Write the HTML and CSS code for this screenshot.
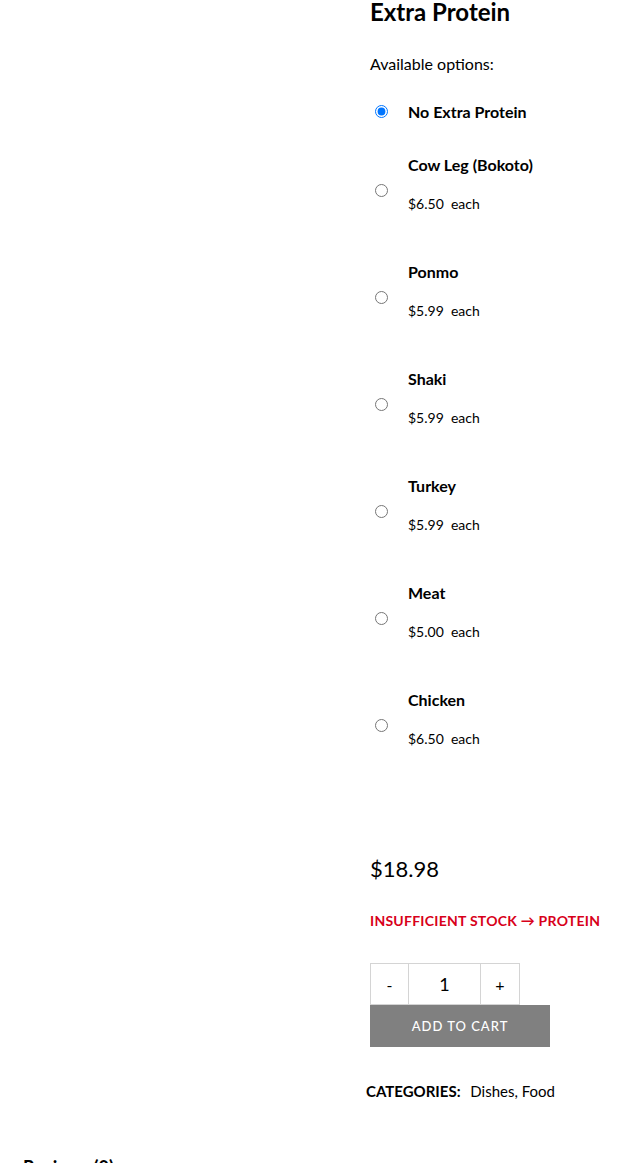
FILE: index.html
```html
<!DOCTYPE html>
<html>
<head>
<meta charset="utf-8">
<link rel="stylesheet" href="styles.css">
</head>
<body>
<div class="product">
  <div class="gallery"></div>
  <div class="summary">
    <h3 class="addon-title">Extra Protein</h3>
    <p class="avail">Available options:</p>
    <div class="opt opt-first">
      <input type="radio" name="p" checked>
      <div class="info"><div class="name">No Extra Protein</div></div>
    </div>
    <div class="opt">
      <input type="radio" name="p">
      <div class="info"><div class="name">Cow Leg (Bokoto)</div><div class="price">$6.50&nbsp; each</div></div>
    </div>
    <div class="opt">
      <input type="radio" name="p">
      <div class="info"><div class="name">Ponmo</div><div class="price">$5.99&nbsp; each</div></div>
    </div>
    <div class="opt">
      <input type="radio" name="p">
      <div class="info"><div class="name">Shaki</div><div class="price">$5.99&nbsp; each</div></div>
    </div>
    <div class="opt">
      <input type="radio" name="p">
      <div class="info"><div class="name">Turkey</div><div class="price">$5.99&nbsp; each</div></div>
    </div>
    <div class="opt">
      <input type="radio" name="p">
      <div class="info"><div class="name">Meat</div><div class="price">$5.00&nbsp; each</div></div>
    </div>
    <div class="opt">
      <input type="radio" name="p">
      <div class="info"><div class="name">Chicken</div><div class="price">$6.50&nbsp; each</div></div>
    </div>
    <div class="total">$18.98</div>
    <div class="stock">Insufficient stock → Protein</div>
    <div class="qty">
      <span class="qbtn qminus">-</span>
      <span class="qval">1</span>
      <span class="qbtn">+</span>
    </div>
    <div class="cart">Add to cart</div>
    <div class="meta"><span class="meta-label">Categories:</span> <span class="meta-val">Dishes, Food</span></div>
  </div>
</div>
<div class="tabs">
  <div class="tab">Reviews (0)</div>
</div>
</body>
</html>
```

FILE: styles.css
```css
html, body {
  margin: 0;
  padding: 0;
  background: #fff;
}
body {
  font-family: "Lato", "Open Sans", sans-serif;
  color: #000;
  width: 625px;
  overflow: hidden;
}
.product {
  display: flex;
}
.gallery {
  width: 370px;
  flex-shrink: 0;
}
.summary {
  flex: 1;
  display: flex;
  flex-direction: column;
  align-items: flex-start;
}
.addon-title {
  margin: 0;
  font-size: 24px;
  line-height: 24px;
  font-weight: 700;
}
.avail {
  margin: 28px 0 0 0;
  font-size: 16px;
  line-height: 24px;
}
.opt {
  display: flex;
  align-items: flex-start;
  height: 107px;
}
.opt-first {
  margin-top: 24px;
  height: 53px;
}
.opt input {
  width: 13px;
  height: 13px;
  margin: 31px 20px 0 5px;
  flex-shrink: 0;
}
.opt-first input {
  margin-top: 5px;
}
.info {
  display: flex;
  flex-direction: column;
}
.name {
  font-size: 16px;
  line-height: 24px;
  font-weight: 700;
}
.price {
  margin-top: 15px;
  font-size: 14px;
  line-height: 24px;
}
.total {
  margin-top: 59px;
  font-size: 22px;
  line-height: 30px;
}
.stock {
  margin-top: 27px;
  font-size: 14px;
  line-height: 20px;
  font-weight: 700;
  letter-spacing: 0.25px;
  text-transform: uppercase;
  color: #d8001a;
}
.qty {
  margin-top: 32px;
  display: flex;
  height: 42px;
}
.qbtn, .qval {
  display: flex;
  align-items: center;
  justify-content: center;
  border: 1px solid #d4d4d4;
  box-sizing: border-box;
  height: 42px;
  font-size: 16px;
}
.qbtn {
  width: 40px;
}
.qminus {
  width: 39px;
}
.qval {
  width: 71px;
  border-left: none;
  border-right: none;
  font-size: 18px;
}
.cart {
  width: 180px;
  height: 42px;
  background: #808080;
  color: #fff;
  display: flex;
  align-items: center;
  justify-content: center;
  text-transform: uppercase;
  font-size: 13px;
  letter-spacing: 1px;
  font-weight: 500;
}
.meta {
  margin: 33px 0 0 -4px;
  font-size: 15px;
  line-height: 22px;
}
.meta-label {
  font-weight: 700;
  text-transform: uppercase;
  margin-right: 6px;
}
.tabs {
  padding: 53px 0 0 23px;
}
.tab {
  font-size: 18px;
  font-weight: 700;
  line-height: 24px;
}
```
